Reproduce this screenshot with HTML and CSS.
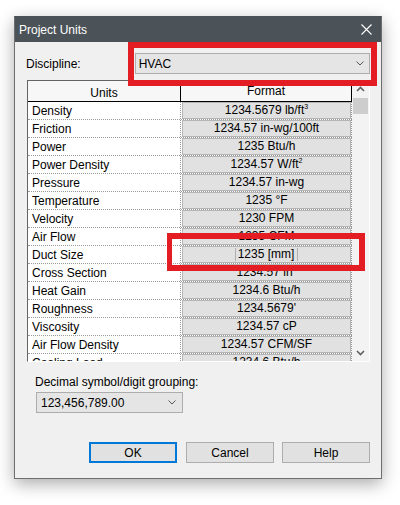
FILE: index.html
```html
<!DOCTYPE html>
<html>
<head>
<meta charset="utf-8">
<link rel="stylesheet" href="styles.css">
</head>
<body>
<div class="window">
  <div class="titlebar">
    <span class="title">Project Units</span>
    <svg class="close" width="11" height="11" viewBox="0 0 11 11"><path d="M0.5 0.5 L10.5 10.5 M10.5 0.5 L0.5 10.5" stroke="#fff" stroke-width="1.1" fill="none"/></svg>
  </div>
  <div class="content">
    <div class="discipline-row">
      <span class="label">Discipline:</span>
      <div class="combo combo-wide">
        <span>HVAC</span>
        <svg class="chev" width="8" height="5" viewBox="0 0 8 5"><path d="M0.5 0.5 L4 4 L7.5 0.5" stroke="#555" stroke-width="1" fill="none"/></svg>
      </div>
    </div>
    <div class="table">
      <div class="grid">
        <div class="row head">
          <div class="c-units">Units</div>
          <div class="c-format">Format</div>
        </div>
        <div class="rows">
          <div class="row"><div class="c-units">Density</div><div class="c-format"><div class="fbox">1234.5679 lb/ft<sup>3</sup></div></div></div>
          <div class="row"><div class="c-units">Friction</div><div class="c-format"><div class="fbox">1234.57 in-wg/100ft</div></div></div>
          <div class="row"><div class="c-units">Power</div><div class="c-format"><div class="fbox">1235 Btu/h</div></div></div>
          <div class="row"><div class="c-units">Power Density</div><div class="c-format"><div class="fbox">1234.57 W/ft<sup>2</sup></div></div></div>
          <div class="row"><div class="c-units">Pressure</div><div class="c-format"><div class="fbox">1234.57 in-wg</div></div></div>
          <div class="row"><div class="c-units">Temperature</div><div class="c-format"><div class="fbox">1235 °F</div></div></div>
          <div class="row"><div class="c-units">Velocity</div><div class="c-format"><div class="fbox">1230 FPM</div></div></div>
          <div class="row"><div class="c-units">Air Flow</div><div class="c-format"><div class="fbox">1235 CFM</div></div></div>
          <div class="row"><div class="c-units">Duct Size</div><div class="c-format"><div class="fbox"><span class="edit">1235 [mm]</span></div></div></div>
          <div class="row"><div class="c-units">Cross Section</div><div class="c-format"><div class="fbox">1234.57 in<sup>2</sup></div></div></div>
          <div class="row"><div class="c-units">Heat Gain</div><div class="c-format"><div class="fbox">1234.6 Btu/h</div></div></div>
          <div class="row"><div class="c-units">Roughness</div><div class="c-format"><div class="fbox">1234.5679'</div></div></div>
          <div class="row"><div class="c-units">Viscosity</div><div class="c-format"><div class="fbox">1234.57 cP</div></div></div>
          <div class="row"><div class="c-units">Air Flow Density</div><div class="c-format"><div class="fbox">1234.57 CFM/SF</div></div></div>
          <div class="row"><div class="c-units">Cooling Load</div><div class="c-format"><div class="fbox">1234.6 Btu/h</div></div></div>
        </div>
      </div>
      <div class="scrollbar">
        <svg class="arrow" width="17" height="17" viewBox="0 0 17 17"><path d="M5 10 L8.5 6.5 L12 10" stroke="#606060" stroke-width="1.6" fill="none"/></svg>
        <div class="track"><div class="thumb"></div></div>
        <svg class="arrow" width="17" height="17" viewBox="0 0 17 17"><path d="M5 7 L8.5 10.5 L12 7" stroke="#606060" stroke-width="1.6" fill="none"/></svg>
      </div>
    </div>
    <div class="decimal-label">Decimal symbol/digit grouping:</div>
    <div class="combo combo-small">
      <span>123,456,789.00</span>
      <svg class="chev" width="8" height="5" viewBox="0 0 8 5"><path d="M0.5 0.5 L4 4 L7.5 0.5" stroke="#555" stroke-width="1" fill="none"/></svg>
    </div>
    <div class="buttons">
      <div class="btn btn-default">OK</div>
      <div class="btn">Cancel</div>
      <div class="btn">Help</div>
    </div>
  </div>
</div>
<div class="annot annot-discipline"></div>
<div class="annot annot-duct"></div>
</body>
</html>
```

FILE: styles.css
```css
html, body {
  margin: 0;
  padding: 0;
  background: #ffffff;
}
body {
  font-family: "Liberation Sans", Arial, sans-serif;
  font-size: 12px;
  color: #000;
  width: 400px;
  height: 505px;
  overflow: hidden;
  position: relative;
}
.window {
  margin: 16px 0 0 14px;
  width: 368px;
  height: 463px;
  box-sizing: border-box;
  border: 1px solid #6e6e6e;
  border-top-color: #4b5359;
  background: #f0f0f0;
  box-shadow: 0 5px 16px rgba(0, 0, 0, 0.33);
  display: flex;
  flex-direction: column;
}
.titlebar {
  height: 25px;
  background: #4b5359;
  color: #fff;
  display: flex;
  align-items: center;
  justify-content: space-between;
  padding: 0 9px 0 4px;
  flex: none;
}
.title {
  font-size: 12px;
  line-height: 14px;
  margin-top: 1px;
}
.close {
  display: block;
}
.content {
  padding: 11px 11px 0 12px;
  display: flex;
  flex-direction: column;
}
.discipline-row {
  display: flex;
  align-items: center;
  height: 21px;
}
.label {
  margin-left: -1px;
  width: 109px;
}
.combo {
  box-sizing: border-box;
  background: #e5e5e5;
  border: 1px solid #adadad;
  display: flex;
  align-items: center;
  justify-content: space-between;
  padding: 0 5px 0 3px;
}
.combo-wide {
  width: 236px;
  height: 21px;
}
.chev {
  display: block;
}
.table {
  margin-top: 6px;
  width: 343px;
  height: 282px;
  box-sizing: border-box;
  border-left: 1px solid #646464;
  border-top: 1px solid #646464;
  border-right: 1px solid #ffffff;
  border-bottom: 1px solid #ffffff;
  display: flex;
  background: #fff;
}
.grid {
  width: 324px;
  height: 280px;
  overflow: hidden;
  display: flex;
  flex-direction: column;
}
.row {
  display: flex;
  height: 18px;
  box-sizing: border-box;
  border-bottom: 1px dotted #9a9a9a;
}
.row.head {
  height: 21px;
  border-bottom: 1px solid #000;
  background: #f7f7f7;
  flex: none;
}
.head .c-units, .head .c-format {
  justify-content: center;
  border-right: 1px solid #000;
  padding: 3px 0 0 0;
}
.c-units {
  width: 153px;
  box-sizing: border-box;
  border-right: 1px dotted #9a9a9a;
  padding-left: 4px;
  display: flex;
  align-items: center;
  white-space: nowrap;
}
.c-format {
  width: 171px;
  box-sizing: border-box;
  border-right: 1px dotted #9a9a9a;
  display: flex;
  align-items: stretch;
  padding-left: 1px;
}
.fbox {
  flex: 1;
  box-sizing: border-box;
  background: #e1e1e1;
  border: 1px solid #b5b5b5;
  display: block;
  text-align: center;
  line-height: 15px;
  white-space: nowrap;
}
sup {
  font-size: 7px;
  line-height: 0;
  vertical-align: 5px;
}
.edit {
  border-left: 1px solid #b0b0b0;
  border-right: 1px solid #b0b0b0;
  padding: 0 3px 0 2px;
  display: inline-block;
  line-height: 13px;
  vertical-align: top;
  margin-top: 1px;
}
.scrollbar {
  width: 17px;
  background: #f3f3f3;
  display: flex;
  flex-direction: column;
}
.arrow {
  display: block;
  flex: none;
}
.track {
  flex: 1;
  padding: 0 1px;
}
.thumb {
  height: 16px;
  background: #cdcdcd;
}
.decimal-label {
  margin-top: 13px;
  margin-left: 8px;
  line-height: 14px;
}
.combo-small {
  margin-top: 3px;
  margin-left: 9px;
  width: 147px;
  height: 21px;
  padding-left: 4px;
  padding-right: 6px;
}
.buttons {
  margin-top: 29px;
  display: flex;
  justify-content: flex-end;
  gap: 8px;
}
.btn {
  width: 88px;
  height: 21px;
  box-sizing: border-box;
  background: #e1e1e1;
  border: 1px solid #adadad;
  display: flex;
  align-items: center;
  justify-content: center;
}
.btn-default {
  border: 2px solid #0078d7;
  margin-right: 1px;
}
.annot {
  position: absolute;
  box-sizing: border-box;
  border: 6px solid #e41c24;
}
.annot-discipline {
  left: 128px;
  top: 42px;
  width: 249px;
  height: 44px;
}
.annot-duct {
  left: 167px;
  top: 233px;
  width: 198px;
  height: 38px;
  border-left-width: 5px;
}
```
